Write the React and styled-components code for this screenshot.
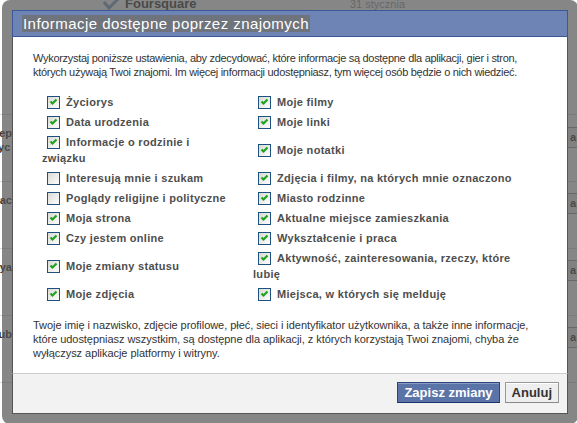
import React, { useId } from 'react';
import styled, { createGlobalStyle } from 'styled-components';

const GlobalStyle = createGlobalStyle`
  html, body {
    margin: 0;
    padding: 0;
    background: #ffffff;
  }
  body {
    font-family: "Liberation Sans", Arial, sans-serif;
    font-size: 11px;
    color: #333333;
  }
`;

const Page = styled.div`
  position: relative;
  width: 577px;
  height: 423px;
  overflow: hidden;
  background: #ffffff;
`;

/* page content behind the dialog */
const TopRow = styled.div`
  height: 10px;
  display: flex;
  align-items: flex-end;
  overflow: hidden;
  padding-left: 103px;
  line-height: 12px;
`;

const AppIcon = styled.span`
  display: inline-flex;
  width: 16px;
  height: 12px;
  margin-right: 6px;
`;

const AppName = styled.span`
  width: 225px;
  font-size: 13px;
  font-weight: bold;
  color: #333333;
`;

const AppDate = styled.span`
  font-size: 11px;
  color: #999999;
`;

const BgRow = styled.div`
  height: ${(p) => p.$h}px;
  display: flex;
  justify-content: space-between;
  border-bottom: 1px solid #d9d9d9;
  box-sizing: border-box;
`;

const BgLeft = styled.div`
  width: 12px;
  display: flex;
  justify-content: flex-end;
  padding-top: 11px;
  font-weight: bold;
  font-size: 11px;
  line-height: 14px;
  white-space: nowrap;
  overflow: hidden;
  color: #333333;
`;

const BgRight = styled.div`
  width: 10px;
  padding-top: ${(p) => p.$top}px;
  overflow: hidden;
`;

const BgButton = styled.div`
  height: 21px;
  width: 40px;
  box-sizing: border-box;
  border: 1px solid #999999;
  background: #eeeeee;
  font-weight: bold;
  line-height: 19px;
  padding-left: 2px;
  color: #333333;
`;

/* dialog */
const Overlay = styled.div`
  position: absolute;
  left: 2px;
  top: 0;
  width: 576px;
  height: 424px;
  box-sizing: border-box;
  padding: 10px;
  border-radius: 8px;
  background: rgba(82, 82, 82, 0.7);
`;

const Dialog = styled.div`
  height: 404px;
  display: flex;
  flex-direction: column;
`;

const TitleBar = styled.div`
  height: 27px;
  box-sizing: border-box;
  background: #6d84b4;
  border: 1px solid #3b5998;
  display: flex;
  align-items: center;
  padding-left: 9px;
`;

const TitleText = styled.span`
  font-size: 15px;
  letter-spacing: 0.45px;
  line-height: 17px;
  color: #ffffff;
  background: #6e737c;
  padding: 0 1px;
`;

const Body = styled.div`
  flex: 1;
  background: #ffffff;
  border-left: 1px solid #555555;
  border-right: 1px solid #555555;
  padding: 14px 19px 0 20px;
  line-height: 14px;
`;

const Intro = styled.p`
  margin: 0;
  letter-spacing: -0.3px;
`;

const Table = styled.table`
  border-collapse: collapse;
  margin: 13px 0 14px 9px;
`;

const Cell = styled.td`
  width: ${(p) => p.$w}px;
  padding: 2px ${(p) => p.$pr}px 2px 0;
  vertical-align: middle;
`;

const Label = styled.label`
  display: block;
  font-weight: bold;
  line-height: 16px;
  letter-spacing: 0.3px;
  color: #4e4e4e;
`;

const BoxWrap = styled.span`
  display: inline-block;
  width: 13px;
  height: 13px;
  margin: 0 6px 0 5px;
  vertical-align: -3px;
`;

const Footnote = styled.p`
  margin: 0;
  letter-spacing: -0.05px;
`;

const Footer = styled.div`
  height: 41px;
  box-sizing: border-box;
  background: #f2f2f2;
  border: 1px solid #555555;
  border-top: 1px solid #cccccc;
  display: flex;
  justify-content: flex-end;
  align-items: flex-start;
  gap: 5px;
  padding: 8px 8px 0 0;
`;

const Button = styled.button`
  height: 21px;
  box-sizing: border-box;
  padding: 0 6px;
  font-family: "Liberation Sans", Arial, sans-serif;
  font-size: 13px;
  font-weight: bold;
  line-height: 19px;
  border: 1px solid;
  cursor: pointer;
  color: ${(p) => (p.$primary ? '#ffffff' : '#333333')};
  background: ${(p) => (p.$primary ? '#5b74a8' : '#eeeeee')};
  border-color: ${(p) => (p.$primary ? '#29447e #29447e #1a356e' : '#999999 #999999 #888888')};
  box-shadow: inset 0 1px 0 ${(p) => (p.$primary ? '#8a9cc2' : '#ffffff')};
`;

const Checkbox = ({ checked }) => {
  const id = useId();
  return (
    <BoxWrap>
      <svg width="13" height="13" viewBox="0 0 13 13">
        <defs>
          <linearGradient id={id} x1="0" y1="0" x2="1" y2="1">
            <stop offset="0" stopColor="#d8d8d2" />
            <stop offset="1" stopColor="#ffffff" />
          </linearGradient>
        </defs>
        <rect x="0.5" y="0.5" width="12" height="12" fill={`url(#${id})`} stroke="#1c5180" />
        {checked && (
          <path d="M3.5 5.5 L5.5 7.5 L9.5 3.5" stroke="#21a121" strokeWidth="2.2" fill="none" />
        )}
      </svg>
    </BoxWrap>
  );
};

const FoursquareIcon = () => (
  <svg width="16" height="12" viewBox="0 0 16 12">
    <path d="M1 4 L6 10 L15 1" stroke="#7d9fc4" strokeWidth="3" fill="none" />
  </svg>
);

const ROWS = [
  [['Życiorys', true], ['Moje filmy', true]],
  [['Data urodzenia', true], ['Moje linki', true]],
  [['Informacje o rodzinie i związku', true], ['Moje notatki', true]],
  [['Interesują mnie i szukam', false], ['Zdjęcia i filmy, na których mnie oznaczono', true]],
  [['Poglądy religijne i polityczne', false], ['Miasto rodzinne', true]],
  [['Moja strona', true], ['Aktualne miejsce zamieszkania', true]],
  [['Czy jestem online', true], ['Wykształcenie i praca', true]],
  [['Moje zmiany statusu', true], ['Aktywność, zainteresowania, rzeczy, które lubię', true]],
  [['Moje zdjęcia', true], ['Miejsca, w których się melduję', true]],
];

const BG_ROWS = [
  { h: 105, left: '', top: 0, btn: false },
  { h: 67, left: 'Wydawca: Step', left2: 'Zycz dostęp yc', top: 12, btn: true },
  { h: 67, left: 'Wydawca: Zyngac', top: 11, btn: true },
  { h: 67, left: 'Wydawca: Playa', top: 11, btn: true },
  { h: 67, left: 'Wydawca: Clubub', top: 11, btn: true },
];

export default function App() {
  return (
    <Page>
      <GlobalStyle />
      <TopRow>
        <AppIcon><FoursquareIcon /></AppIcon>
        <AppName>Foursquare</AppName>
        <AppDate>31 stycznia</AppDate>
      </TopRow>
      {BG_ROWS.map((r, i) => (
        <BgRow key={i} $h={r.h}>
          <BgLeft>
            <div>
              {r.left}
              {r.left2 && <><br />{r.left2}</>}
            </div>
          </BgLeft>
          <BgRight $top={r.top}>
            {r.btn && <BgButton>a</BgButton>}
          </BgRight>
        </BgRow>
      ))}

      <Overlay>
        <Dialog>
          <TitleBar>
            <TitleText>Informacje dostępne poprzez znajomych</TitleText>
          </TitleBar>
          <Body>
            <Intro>
              Wykorzystaj poniższe ustawienia, aby zdecydować, które informacje są dostępne dla aplikacji, gier i stron,
              których używają Twoi znajomi. Im więcej informacji udostępniasz, tym więcej osób będzie o nich wiedzieć.
            </Intro>
            <Table>
              <tbody>
                {ROWS.map(([left, right], i) => (
                  <tr key={i}>
                    <Cell $w={191} $pr={20}>
                      <Label><Checkbox checked={left[1]} />{left[0]}</Label>
                    </Cell>
                    <Cell $w={275} $pr={0}>
                      <Label><Checkbox checked={right[1]} />{right[0]}</Label>
                    </Cell>
                  </tr>
                ))}
              </tbody>
            </Table>
            <Footnote>
              Twoje imię i nazwisko, zdjęcie profilowe, płeć, sieci i identyfikator użytkownika, a także inne informacje,
              które udostępniasz wszystkim, są dostępne dla aplikacji, z których korzystają Twoi znajomi, chyba że
              wyłączysz aplikacje platformy i witryny.
            </Footnote>
          </Body>
          <Footer>
            <Button $primary>Zapisz zmiany</Button>
            <Button>Anuluj</Button>
          </Footer>
        </Dialog>
      </Overlay>
    </Page>
  );
}
